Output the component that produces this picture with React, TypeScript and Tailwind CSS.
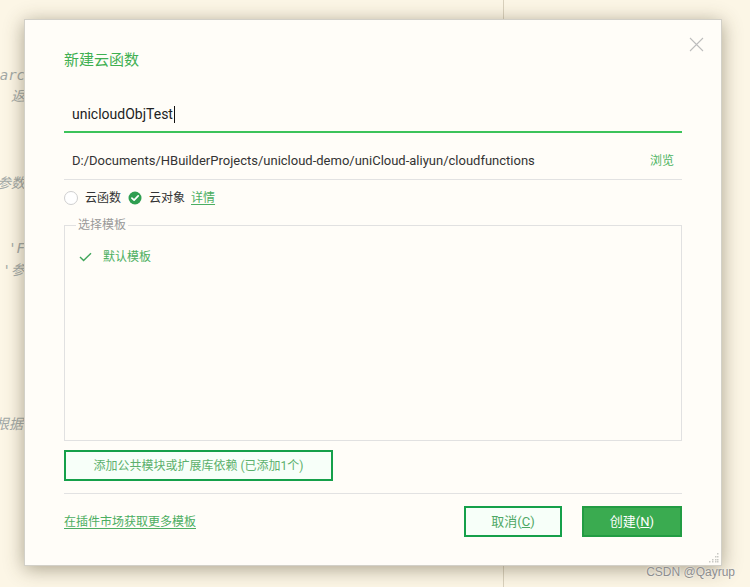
import React from 'react';

const codeLines: { top: string; w: string; text: string }[] = [
  { top: 'mt-[65px]', w: 'w-[25px]', text: '@param {object} searc' },
  { top: 'mt-[1px]', w: 'w-[25px]', text: '返' },
  { top: 'mt-[67px]', w: 'w-[25px]', text: '参数' },
  { top: 'mt-[45px]', w: 'w-[25px]', text: "'F" },
  { top: 'mt-[2px]', w: 'w-[25px]', text: "'参" },
  { top: 'mt-[134px]', w: 'w-[23px]', text: '// 根据' },
];

const CloseIcon = () => (
  <svg width="15" height="15" viewBox="0 0 15 15" className="block">
    <path d="M1 1L14 14M14 1L1 14" stroke="#bdbdbd" strokeWidth="1.1" fill="none" />
  </svg>
);

const CheckedRadio = () => (
  <svg width="14" height="14" viewBox="0 0 14 14" className="block">
    <circle cx="7" cy="7" r="6.5" fill="#2f9e50" />
    <path d="M3.9 7.1L6.1 9.2L10.2 4.9" stroke="#fff" strokeWidth="1.7" fill="none" strokeLinecap="round" strokeLinejoin="round" />
  </svg>
);

const ResizeGrip = () => (
  <svg width="10" height="10" viewBox="0 0 10 10" className="block">
    {[
      [8, 0], [6, 3], [8, 3], [3, 6], [6, 6], [8, 6], [0, 8], [3, 8], [6, 8], [8, 8],
    ].map(([x, y], i) => (
      <rect key={i} x={x} y={y} width="1.5" height="1.5" fill="#c9c9c4" />
    ))}
  </svg>
);

const App: React.FC = () => {
  return (
    <div
      className="relative w-[750px] h-[587px] overflow-hidden bg-[#fcf6e6] flex"
      style={{ fontFamily: 'Roboto, "Noto Sans CJK SC", sans-serif' }}
    >
      {/* editor behind the dialog */}
      <div className="w-[504px] h-full border-r border-[#d9d1bd] flex flex-col">
        {codeLines.map((l, i) => (
          <div
            key={i}
            className={`${l.top} ${l.w} h-[20px] flex justify-end whitespace-nowrap italic text-[14px] leading-[20px] text-[#a3a9a6]`}
            style={{ fontFamily: '"DejaVu Sans Mono", "Noto Sans CJK SC", monospace' }}
          >
            {l.text}
          </div>
        ))}
      </div>

      {/* dialog */}
      <div className="absolute left-[24px] top-[19px] w-[698px] h-[547px] bg-[#fffdf8] border border-[#d2d0c8] shadow-[0_3px_18px_rgba(70,60,30,0.45)] px-[39px] pt-[30px] flex flex-col">
        <button className="absolute right-[17px] top-[17px]">
          <CloseIcon />
        </button>

        <div className="text-[15px] leading-[20px] text-[#3fb052]">新建云函数</div>

        <div className="mt-[28px] h-[35px] border-b-2 border-[#3cc35a] flex items-center pl-[8px] text-[14px] text-[#222]">
          <span>unicloudObjTest</span>
          <span className="w-px h-[17px] bg-[#111] ml-px" />
        </div>

        <div className="pt-[18px] pb-[8px] border-b border-[#e2e2e2] flex items-center justify-between pl-[8px] pr-[8px] text-[13px] leading-[20px] text-[#333]">
          <span>D:/Documents/HBuilderProjects/unicloud-demo/uniCloud-aliyun/cloudfunctions</span>
          <span className="text-[12px] text-[#4cb461]">浏览</span>
        </div>

        <div className="mt-[8px] h-[20px] flex items-center text-[12px] text-[#333]">
          <span className="w-[14px] h-[14px] rounded-full border border-[#cfcfcf] bg-white" />
          <span className="ml-[7px]">云函数</span>
          <span className="ml-[7px]">
            <CheckedRadio />
          </span>
          <span className="ml-[7px]">云对象</span>
          <span className="ml-[6px] text-[#4cae62] underline underline-offset-2">详情</span>
        </div>

        <fieldset className="mt-[9px] h-[224px] border border-[#e1e1e1] px-[14px]">
          <legend className="ml-[-3px] px-[2px] text-[12px] leading-[16px] text-[#9a9a9a]">选择模板</legend>
          <div className="mt-[14px] h-[20px] flex items-center text-[12px] text-[#4caf60]">
            <svg width="13" height="10" viewBox="0 0 13 10" className="block">
              <path d="M1 5L4.6 8.6L12 1.2" stroke="#3fa55a" strokeWidth="1.4" fill="none" />
            </svg>
            <span className="ml-[11px]">默认模板</span>
          </div>
        </fieldset>

        <button className="mt-[9px] w-[269px] h-[31px] border-2 border-[#15a04a] bg-[#f7fff9] text-[12px] text-[#5cb06c] flex items-center justify-center">
          添加公共模块或扩展库依赖 (已添加1个)
        </button>

        <div className="mt-[12px] border-t border-[#e2e2e2]" />

        <div className="mt-[12px] flex items-center justify-between">
          <span className="text-[12px] text-[#4cae62] underline underline-offset-2">在插件市场获取更多模板</span>
          <div className="flex items-center gap-[20px]">
            <button className="w-[98px] h-[31px] border-2 border-[#15a04a] bg-[#f7fff9] text-[13px] text-[#4ea865]">
              取消(<span className="underline">C</span>)
            </button>
            <button className="w-[100px] h-[31px] border-2 border-[#229c43] bg-[#3aab50] text-[13px] text-white">
              创建(<span className="underline">N</span>)
            </button>
          </div>
        </div>

        <div className="absolute right-[2px] bottom-[2px]">
          <ResizeGrip />
        </div>
      </div>

      {/* watermark */}
      <div
        className="absolute right-[15px] bottom-[6px] text-[12px] text-[#8d8d8d] [text-shadow:0_0_2px_#fff]"
        style={{ fontFamily: '"Liberation Sans", Arial, sans-serif' }}
      >
        CSDN @Qayrup
      </div>
    </div>
  );
};

export default App;
